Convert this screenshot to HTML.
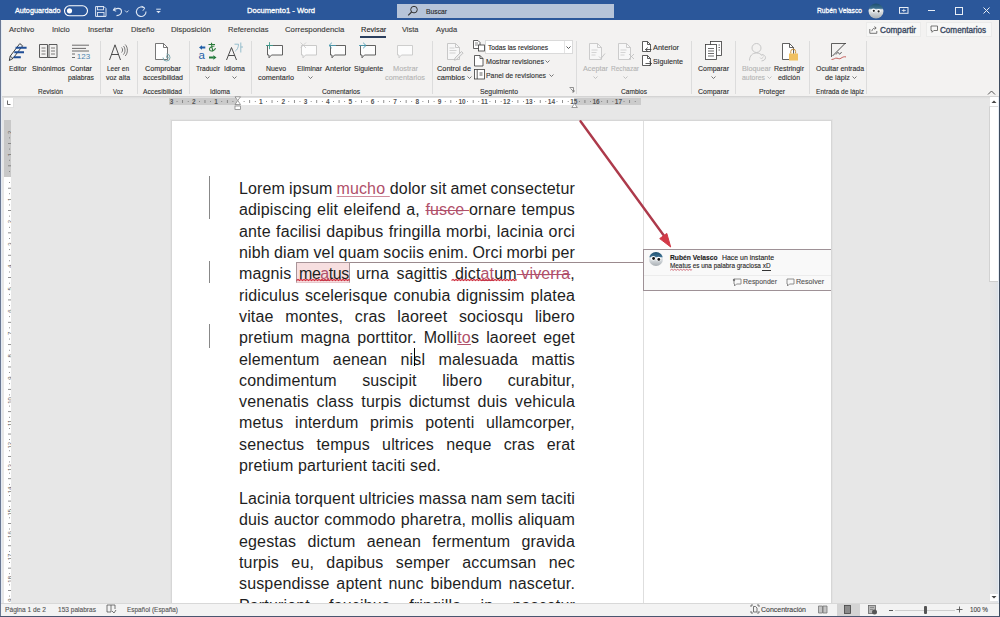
<!DOCTYPE html><html><head><meta charset="utf-8"><style>
*{margin:0;padding:0;box-sizing:border-box}
html,body{width:1000px;height:617px;overflow:hidden;background:#e7e7e7;font-family:"Liberation Sans",sans-serif}
.t{position:absolute;white-space:nowrap;transform-origin:0 50%;-webkit-text-stroke:0.12px currentColor}
.r{position:absolute}
.s{position:absolute;overflow:visible}
.ln{position:absolute;left:239px;width:336px;height:21px;display:flex;justify-content:space-between;font-size:16px;line-height:21px;color:#1e1e1e;white-space:nowrap;letter-spacing:0.15px}
.ln span{position:relative}
.red{color:#b0506a}
</style></head><body>

<div class="r" style="left:0px;top:0px;width:1000px;height:21px;background:#2b579a"></div>
<div class="r" style="left:0px;top:20px;width:1000px;height:1px;background:#34527f"></div>
<div class="t" style="left:14.50px;top:6.20px;font-size:8px;line-height:9.60px;color:#fff;transform:scaleX(0.9052);-webkit-text-stroke:0.3px #fff">Autoguardado</div>
<svg class="s" style="left:63px;top:5px;" width="26" height="12" viewBox="0 0 26 12"><rect x="1.5" y="0.8" width="23" height="10" rx="5" fill="none" stroke="#fff" stroke-width="1.1"/><circle cx="6.5" cy="5.8" r="2.6" fill="#fff"/></svg>
<svg class="s" style="left:95px;top:6px;" width="12" height="11" viewBox="0 0 12 11"><path d="M0.6 0.6H9l2 2V10.4H0.6Z" fill="none" stroke="#dde6f3" stroke-width="1"/><rect x="2.5" y="0.6" width="6" height="3.2" fill="none" stroke="#dde6f3" stroke-width="0.9"/><rect x="2.5" y="6.5" width="6.5" height="3.9" fill="none" stroke="#dde6f3" stroke-width="0.9"/></svg>
<svg class="s" style="left:112px;top:5px;" width="18" height="12" viewBox="0 0 18 12"><path d="M3 2.5 L1.2 5.2 L4.2 6.2" fill="none" stroke="#dde6f3" stroke-width="1"/><path d="M1.6 5.2 C4 2.8 9 2.5 9.5 6 C9.8 8.8 7.5 10.5 4.5 10.6" fill="none" stroke="#dde6f3" stroke-width="1.1"/><path d="M13 5.5l1.8 1.8l1.8-1.8" fill="none" stroke="#dde6f3" stroke-width="0.9"/></svg>
<svg class="s" style="left:135px;top:5px;" width="13" height="13" viewBox="0 0 13 13"><path d="M9.5 3.2 A4.8 4.8 0 1 0 11 6.5" fill="none" stroke="#dde6f3" stroke-width="1.1"/><path d="M6.8 1.2 L9.8 3.2 L7.8 5.8" fill="none" stroke="#dde6f3" stroke-width="1"/></svg>
<svg class="s" style="left:155px;top:8px;" width="7" height="6" viewBox="0 0 7 6"><path d="M1.2 1.2H5.8" stroke="#dde6f3" stroke-width="1"/><path d="M1.2 3H5.8L3.5 5.3Z" fill="#dde6f3"/></svg>
<div class="t" style="left:246.50px;top:6.00px;font-size:8px;line-height:9.60px;color:#fff;transform:scaleX(0.9519);-webkit-text-stroke:0.3px #fff">Documento1 - Word</div>
<div class="r" style="left:397px;top:4px;width:217px;height:13.5px;background:#b6c4d9"></div>
<svg class="s" style="left:407px;top:5px;" width="12" height="12" viewBox="0 0 12 12"><circle cx="7" cy="4.6" r="3.3" fill="none" stroke="#333" stroke-width="1"/><path d="M4.6 7 L1.2 10.4" stroke="#333" stroke-width="1.1"/></svg>
<div class="t" style="left:426.00px;top:6.50px;font-size:7.5px;line-height:9.00px;color:#262626;transform:scaleX(0.8996);">Buscar</div>
<div class="t" style="left:817.00px;top:6.20px;font-size:8px;line-height:9.60px;color:#fff;transform:scaleX(0.8361);-webkit-text-stroke:0.3px #fff">Rubén Velasco</div>
<svg class="s" style="left:868px;top:3px;" width="16" height="16" viewBox="0 0 16 16"><defs><linearGradient id="av" x1="0" y1="0" x2="0" y2="1"><stop offset="0" stop-color="#1d4f6e"/><stop offset="0.32" stop-color="#3d7090"/><stop offset="0.42" stop-color="#e8ecee"/><stop offset="1" stop-color="#a8aeb3"/></linearGradient></defs><circle cx="8" cy="8" r="7.5" fill="url(#av)"/><ellipse cx="5.5" cy="7.5" rx="2.2" ry="2" fill="#fff"/><ellipse cx="10.5" cy="8" rx="2.2" ry="2" fill="#fff"/><circle cx="5.8" cy="7.8" r="1.1" fill="#222"/><circle cx="10.6" cy="8.4" r="1.1" fill="#222"/></svg>
<svg class="s" style="left:898.5px;top:7px;" width="10" height="7" viewBox="0 0 10 7"><rect x="0.5" y="0.5" width="8.5" height="5.8" fill="none" stroke="#e8eef6" stroke-width="1"/><path d="M2.8 3.5h4M4.8 1.8v3.2" stroke="#e8eef6" stroke-width="0.8"/></svg>
<div class="r" style="left:928px;top:10px;width:7px;height:1px;background:#e8eef6"></div>
<div class="r" style="left:955px;top:7px;width:7.5px;height:7.5px;border:1px solid #e8eef6"></div>
<svg class="s" style="left:982.5px;top:7px;" width="7" height="7" viewBox="0 0 7 7"><path d="M0.5 0.5L6.5 6.5M6.5 0.5L0.5 6.5" stroke="#e8eef6" stroke-width="1"/></svg>
<div class="r" style="left:0px;top:20px;width:1000px;height:77px;background:#f3f2f1"></div>
<div class="t" style="left:9.00px;top:25.40px;font-size:8px;line-height:9.60px;color:#3a3a3a;transform:scaleX(0.9484);">Archivo</div>
<div class="t" style="left:52.30px;top:25.40px;font-size:8px;line-height:9.60px;color:#3a3a3a;transform:scaleX(0.9477);">Inicio</div>
<div class="t" style="left:87.50px;top:25.40px;font-size:8px;line-height:9.60px;color:#3a3a3a;transform:scaleX(0.9291);">Insertar</div>
<div class="t" style="left:130.70px;top:25.40px;font-size:8px;line-height:9.60px;color:#3a3a3a;transform:scaleX(0.9356);">Diseño</div>
<div class="t" style="left:170.70px;top:25.40px;font-size:8px;line-height:9.60px;color:#3a3a3a;transform:scaleX(0.9729);">Disposición</div>
<div class="t" style="left:227.50px;top:25.40px;font-size:8px;line-height:9.60px;color:#3a3a3a;transform:scaleX(0.9487);">Referencias</div>
<div class="t" style="left:284.50px;top:25.40px;font-size:8px;line-height:9.60px;color:#3a3a3a;transform:scaleX(0.9733);">Correspondencia</div>
<div class="t" style="left:360.50px;top:25.40px;font-size:8px;line-height:9.60px;color:#262626;transform:scaleX(0.9330);">Revisar</div>
<div class="t" style="left:401.80px;top:25.40px;font-size:8px;line-height:9.60px;color:#3a3a3a;transform:scaleX(0.9296);">Vista</div>
<div class="t" style="left:435.80px;top:25.40px;font-size:8px;line-height:9.60px;color:#3a3a3a;transform:scaleX(0.9406);">Ayuda</div>
<div class="r" style="left:360px;top:36px;width:26px;height:1.5px;background:#2b3f5e"></div>
<div class="r" style="left:866px;top:22px;width:55px;height:15px;background:#f7f7f6;border:1px solid #ebebea"></div>
<svg class="s" style="left:868.5px;top:25px;" width="9" height="9" viewBox="0 0 9 9"><path d="M0.8 4v4.3h7V6" fill="none" stroke="#555" stroke-width="0.8"/><path d="M2.8 6.2C3.2 3.8 4.8 3 6.8 3M5.5 1.5L7.2 3L5.5 4.5" fill="none" stroke="#555" stroke-width="0.8"/></svg>
<div class="t" style="left:879.50px;top:25.20px;font-size:8.5px;line-height:10.20px;color:#3b4a63;transform:scaleX(0.9648);-webkit-text-stroke:0.35px #3b4a63">Compartir</div>
<div class="r" style="left:926px;top:22px;width:66px;height:15px;background:#f7f7f6;border:1px solid #ebebea"></div>
<svg class="s" style="left:930px;top:25px;" width="9" height="9" viewBox="0 0 9 9"><path d="M1 1h6.5v4.5H3.8L2 7.3V5.5H1z" fill="none" stroke="#555" stroke-width="0.8"/></svg>
<div class="t" style="left:940.00px;top:25.20px;font-size:8.5px;line-height:10.20px;color:#3b4a63;transform:scaleX(0.9546);-webkit-text-stroke:0.35px #3b4a63">Comentarios</div>
<div class="r" style="left:100px;top:41px;width:1px;height:53px;background:#dcdcdc"></div>
<div class="r" style="left:136.5px;top:41px;width:1px;height:53px;background:#dcdcdc"></div>
<div class="r" style="left:189px;top:41px;width:1px;height:53px;background:#dcdcdc"></div>
<div class="r" style="left:251px;top:41px;width:1px;height:53px;background:#dcdcdc"></div>
<div class="r" style="left:431.5px;top:41px;width:1px;height:53px;background:#dcdcdc"></div>
<div class="r" style="left:576px;top:41px;width:1px;height:53px;background:#dcdcdc"></div>
<div class="r" style="left:690.5px;top:41px;width:1px;height:53px;background:#dcdcdc"></div>
<div class="r" style="left:735px;top:41px;width:1px;height:53px;background:#dcdcdc"></div>
<div class="r" style="left:809px;top:41px;width:1px;height:53px;background:#dcdcdc"></div>
<div class="r" style="left:866px;top:41px;width:1px;height:53px;background:#dcdcdc"></div>
<div class="r" style="left:0px;top:96px;width:1000px;height:1px;background:#d4d4d4"></div>
<div class="r" style="left:0px;top:97px;width:1000px;height:2px;background:linear-gradient(#dcdcdc,#e7e7e7)"></div>
<div class="r" style="left:485px;top:40px;width:88px;height:14px;background:#fff;border:1px solid #dadada"></div>
<div class="r" style="left:564px;top:41px;width:1px;height:12px;background:#e4e4e4"></div>
<div class="t" style="left:9.00px;top:64.30px;font-size:8.0px;line-height:9.60px;color:#303030;transform:scaleX(0.8373);">Editor</div>
<div class="t" style="left:32.00px;top:64.30px;font-size:8.0px;line-height:9.60px;color:#303030;transform:scaleX(0.8835);">Sinónimos</div>
<div class="t" style="left:70.00px;top:64.30px;font-size:8.0px;line-height:9.60px;color:#303030;transform:scaleX(0.9162);">Contar</div>
<div class="t" style="left:68.00px;top:73.30px;font-size:8.0px;line-height:9.60px;color:#303030;transform:scaleX(0.8472);">palabras</div>
<div class="t" style="left:107.00px;top:64.30px;font-size:8.0px;line-height:9.60px;color:#303030;transform:scaleX(0.8108);">Leer en</div>
<div class="t" style="left:106.00px;top:73.30px;font-size:8.0px;line-height:9.60px;color:#303030;transform:scaleX(0.8705);">voz alta</div>
<div class="t" style="left:145.00px;top:64.30px;font-size:8.0px;line-height:9.60px;color:#303030;transform:scaleX(0.8996);">Comprobar</div>
<div class="t" style="left:143.00px;top:73.30px;font-size:8.0px;line-height:9.60px;color:#303030;transform:scaleX(0.8732);">accesibilidad</div>
<div class="t" style="left:196.00px;top:64.30px;font-size:8.0px;line-height:9.60px;color:#303030;transform:scaleX(0.8263);">Traducir</div>
<div class="t" style="left:224.00px;top:64.30px;font-size:8.0px;line-height:9.60px;color:#303030;transform:scaleX(0.8745);">Idioma</div>
<div class="t" style="left:266.00px;top:64.30px;font-size:8.0px;line-height:9.60px;color:#303030;transform:scaleX(0.8648);">Nuevo</div>
<div class="t" style="left:258.00px;top:73.30px;font-size:8.0px;line-height:9.60px;color:#303030;transform:scaleX(0.9097);">comentario</div>
<div class="t" style="left:297.00px;top:64.30px;font-size:8.0px;line-height:9.60px;color:#303030;transform:scaleX(0.8652);">Eliminar</div>
<div class="t" style="left:325.00px;top:64.30px;font-size:8.0px;line-height:9.60px;color:#303030;transform:scaleX(0.9281);">Anterior</div>
<div class="t" style="left:354.00px;top:64.30px;font-size:8.0px;line-height:9.60px;color:#303030;transform:scaleX(0.8693);">Siguiente</div>
<div class="t" style="left:393.00px;top:64.30px;font-size:8.0px;line-height:9.60px;color:#b4b4b4;transform:scaleX(0.9220);">Mostrar</div>
<div class="t" style="left:385.00px;top:73.30px;font-size:8.0px;line-height:9.60px;color:#b4b4b4;transform:scaleX(0.9179);">comentarios</div>
<div class="t" style="left:437.00px;top:64.30px;font-size:8.0px;line-height:9.60px;color:#303030;transform:scaleX(0.9211);">Control de</div>
<div class="t" style="left:437.00px;top:73.30px;font-size:8.0px;line-height:9.60px;color:#303030;transform:scaleX(0.9399);">cambios</div>
<div class="t" style="left:488.00px;top:43.40px;font-size:8.0px;line-height:9.60px;color:#262626;transform:scaleX(0.8329);">Todas las revisiones</div>
<div class="t" style="left:486.00px;top:57.00px;font-size:8.0px;line-height:9.60px;color:#303030;transform:scaleX(0.8875);">Mostrar revisiones</div>
<div class="t" style="left:486.00px;top:71.00px;font-size:8.0px;line-height:9.60px;color:#303030;transform:scaleX(0.8593);">Panel de revisiones</div>
<div class="t" style="left:583.00px;top:64.30px;font-size:8.0px;line-height:9.60px;color:#b4b4b4;transform:scaleX(0.9067);">Aceptar</div>
<div class="t" style="left:611.00px;top:64.30px;font-size:8.0px;line-height:9.60px;color:#b4b4b4;transform:scaleX(0.8178);">Rechazar</div>
<div class="t" style="left:653.00px;top:43.10px;font-size:8.0px;line-height:9.60px;color:#303030;transform:scaleX(0.9281);">Anterior</div>
<div class="t" style="left:653.00px;top:57.10px;font-size:8.0px;line-height:9.60px;color:#303030;transform:scaleX(0.8993);">Siguiente</div>
<div class="t" style="left:698.00px;top:64.30px;font-size:8.0px;line-height:9.60px;color:#303030;transform:scaleX(0.8716);">Comparar</div>
<div class="t" style="left:742.00px;top:64.30px;font-size:8.0px;line-height:9.60px;color:#b4b4b4;transform:scaleX(0.9055);">Bloquear</div>
<div class="t" style="left:742.00px;top:73.30px;font-size:8.0px;line-height:9.60px;color:#b4b4b4;transform:scaleX(0.8619);">autores</div>
<div class="t" style="left:774.00px;top:64.30px;font-size:8.0px;line-height:9.60px;color:#303030;transform:scaleX(0.8764);">Restringir</div>
<div class="t" style="left:778.00px;top:73.30px;font-size:8.0px;line-height:9.60px;color:#303030;transform:scaleX(0.8678);">edición</div>
<div class="t" style="left:816.00px;top:64.30px;font-size:8.0px;line-height:9.60px;color:#303030;transform:scaleX(0.8705);">Ocultar entrada</div>
<div class="t" style="left:825.00px;top:73.30px;font-size:8.0px;line-height:9.60px;color:#303030;transform:scaleX(0.9066);">de lápiz</div>
<div class="t" style="left:38.00px;top:87.10px;font-size:8.0px;line-height:9.60px;color:#303030;transform:scaleX(0.8148);">Revisión</div>
<div class="t" style="left:113.00px;top:87.10px;font-size:8.0px;line-height:9.60px;color:#303030;transform:scaleX(0.7494);">Voz</div>
<div class="t" style="left:143.00px;top:87.10px;font-size:8.0px;line-height:9.60px;color:#303030;transform:scaleX(0.8352);">Accesibilidad</div>
<div class="t" style="left:210.00px;top:87.10px;font-size:8.0px;line-height:9.60px;color:#303030;transform:scaleX(0.8329);">Idioma</div>
<div class="t" style="left:322.00px;top:87.10px;font-size:8.0px;line-height:9.60px;color:#303030;transform:scaleX(0.8379);">Comentarios</div>
<div class="t" style="left:480.00px;top:87.10px;font-size:8.0px;line-height:9.60px;color:#303030;transform:scaleX(0.8544);">Seguimiento</div>
<div class="t" style="left:621.00px;top:87.10px;font-size:8.0px;line-height:9.60px;color:#303030;transform:scaleX(0.8236);">Cambios</div>
<div class="t" style="left:698.00px;top:87.10px;font-size:8.0px;line-height:9.60px;color:#303030;transform:scaleX(0.8716);">Comparar</div>
<div class="t" style="left:759.00px;top:87.10px;font-size:8.0px;line-height:9.60px;color:#303030;transform:scaleX(0.8473);">Proteger</div>
<div class="t" style="left:816.00px;top:87.10px;font-size:8.0px;line-height:9.60px;color:#303030;transform:scaleX(0.8302);">Entrada de lápiz</div>
<svg class="s" style="left:204.5px;top:75.5px;" width="5" height="3" viewBox="0 0 5 3"><path d="M0.5 0.5L2.5 2.5L4.5 0.5" fill="none" stroke="#666" stroke-width="0.9"/></svg>
<svg class="s" style="left:231.5px;top:75.5px;" width="5" height="3" viewBox="0 0 5 3"><path d="M0.5 0.5L2.5 2.5L4.5 0.5" fill="none" stroke="#666" stroke-width="0.9"/></svg>
<svg class="s" style="left:307.5px;top:75.5px;" width="5" height="3" viewBox="0 0 5 3"><path d="M0.5 0.5L2.5 2.5L4.5 0.5" fill="none" stroke="#666" stroke-width="0.9"/></svg>
<svg class="s" style="left:466.5px;top:75.5px;" width="5" height="3" viewBox="0 0 5 3"><path d="M0.5 0.5L2.5 2.5L4.5 0.5" fill="none" stroke="#666" stroke-width="0.9"/></svg>
<svg class="s" style="left:544.5px;top:59.5px;" width="5" height="3" viewBox="0 0 5 3"><path d="M0.5 0.5L2.5 2.5L4.5 0.5" fill="none" stroke="#666" stroke-width="0.9"/></svg>
<svg class="s" style="left:548.5px;top:73.5px;" width="5" height="3" viewBox="0 0 5 3"><path d="M0.5 0.5L2.5 2.5L4.5 0.5" fill="none" stroke="#666" stroke-width="0.9"/></svg>
<svg class="s" style="left:592.5px;top:75.5px;" width="5" height="3" viewBox="0 0 5 3"><path d="M0.5 0.5L2.5 2.5L4.5 0.5" fill="none" stroke="#bbb" stroke-width="0.9"/></svg>
<svg class="s" style="left:622.5px;top:75.5px;" width="5" height="3" viewBox="0 0 5 3"><path d="M0.5 0.5L2.5 2.5L4.5 0.5" fill="none" stroke="#bbb" stroke-width="0.9"/></svg>
<svg class="s" style="left:710.5px;top:75.5px;" width="5" height="3" viewBox="0 0 5 3"><path d="M0.5 0.5L2.5 2.5L4.5 0.5" fill="none" stroke="#666" stroke-width="0.9"/></svg>
<svg class="s" style="left:766.5px;top:75.5px;" width="5" height="3" viewBox="0 0 5 3"><path d="M0.5 0.5L2.5 2.5L4.5 0.5" fill="none" stroke="#bbb" stroke-width="0.9"/></svg>
<svg class="s" style="left:851.5px;top:75.5px;" width="5" height="3" viewBox="0 0 5 3"><path d="M0.5 0.5L2.5 2.5L4.5 0.5" fill="none" stroke="#666" stroke-width="0.9"/></svg>
<svg class="s" style="left:566.0px;top:45.5px;" width="5" height="3" viewBox="0 0 5 3"><path d="M0.5 0.5L2.5 2.5L4.5 0.5" fill="none" stroke="#444" stroke-width="0.9"/></svg>
<svg class="s" style="left:569px;top:87px;" width="6" height="6" viewBox="0 0 6 6"><path d="M0.5 0.5h4v4" fill="none" stroke="#777" stroke-width="0.8"/><path d="M1.5 1.5L5 5M3 5h2v-2" fill="none" stroke="#777" stroke-width="0.8"/></svg>
<svg class="s" style="left:987px;top:90px;" width="9" height="5" viewBox="0 0 9 5"><path d="M1 4.5L4.5 1L8 4.5" fill="none" stroke="#555" stroke-width="1"/></svg>
<svg class="s" style="left:8px;top:42px;" width="20" height="20" viewBox="0 0 20 20"><path d="M1.3 18.5 L2.2 14.2 L11.8 1.6 L14.6 3.8 L5 16.4 Z" fill="#eef5fc" stroke="#2d2d2d" stroke-width="0.9" stroke-linejoin="round"/><path d="M2.2 14.2L5 16.4" stroke="#2d2d2d" stroke-width="0.8"/><path d="M7.6 5.8h11M6.3 10.3h9.7M5.7 15.2h7.1" stroke="#1f4e96" stroke-width="2"/></svg>
<svg class="s" style="left:38px;top:43px;" width="21" height="17" viewBox="0 0 21 17"><path d="M1.5 1.5h8v13h-8zM11 1.5h8v13h-8z" fill="none" stroke="#4a4a4a" stroke-width="0.9"/><path d="M9.5 14.5h1.5" stroke="#4a4a4a" stroke-width="0.9"/><path d="M3.5 5h4M3.5 8h4M3.5 11h4M13 5h4M13 8h4M13 11h4" stroke="#5a5a5a" stroke-width="0.8"/></svg>
<svg class="s" style="left:71px;top:44px;" width="20" height="16" viewBox="0 0 20 16"><path d="M1 1.2h17M1 4.4h14M1 7h17M1 10h3M1 13.5h3" stroke="#4a4a4a" stroke-width="0.8"/><text x="5.8" y="15" font-size="8" fill="#4f86b0" font-family="Liberation Sans">123</text></svg>
<svg class="s" style="left:108px;top:43px;" width="21" height="18" viewBox="0 0 21 18"><path d="M1.5 17L7 1.8L12.5 17M3.6 11.5h6.8" fill="none" stroke="#3a3a3a" stroke-width="0.9"/><path d="M13.6 4.5c1.3 1.3 1.3 3.7 0 5M15.4 3c2.1 2.1 2.1 6.5 0 8.6M17.2 1.5c2.9 2.9 2.9 8.6 0 11.5" fill="none" stroke="#555" stroke-width="0.8"/></svg>
<svg class="s" style="left:154px;top:42px;" width="19" height="20" viewBox="0 0 19 20"><path d="M1.5 1.5h8l4 4V17.5h-12z" fill="#fff" stroke="#555" stroke-width="0.8"/><path d="M9.5 1.5v4h4" fill="none" stroke="#555" stroke-width="0.8"/><path d="M9 15.5a3.5 3.5 0 1 0 3.5-3.5" fill="none" stroke="#7aa7ae" stroke-width="1"/><path d="M12.5 13.5v2.2h2.5" fill="none" stroke="#7aa7ae" stroke-width="0.8"/></svg>
<svg class="s" style="left:198px;top:42px;" width="20" height="18" viewBox="0 0 20 18"><path d="M1 5.5l3-2.2v4.4z" fill="#1f5fa8"/><rect x="3.8" y="4.5" width="3.5" height="2" fill="#1f5fa8"/><text x="0.6" y="17" font-size="11.5" font-family="Liberation Sans" fill="#1f5fa8">a</text><path d="M10.5 2.5H17M13.5 0.8C13.5 3.5 14 6.5 15 9.5M16.5 4C13 4 10.5 6.5 11.8 8.3C13 9.6 17 8.8 17.5 6.2" fill="none" stroke="#2a7a3a" stroke-width="1.1"/><path d="M18.5 15.5l-3.2 2.2v-4.4z" fill="#217a3a"/><rect x="11" y="14.5" width="4.5" height="2" fill="#217a3a"/></svg>
<svg class="s" style="left:225px;top:41px;" width="20" height="20" viewBox="0 0 20 20"><path d="M1.5 19L6.5 6.5L11.5 19M3.3 14.5h6.4" fill="none" stroke="#3a3a3a" stroke-width="0.9"/><path d="M9.5 3.2h4c0 3.2-1.2 5.5-3.3 7M15.8 1.5v10M15.8 6h2.2" fill="none" stroke="#8ab8c8" stroke-width="0.9"/></svg>
<svg class="s" style="left:265px;top:42px;" width="19" height="18" viewBox="0 0 19 18"><path d="M2.5 3.5h15v9.5H6.5l-2.5 2.8v-2.8H2.5z" fill="#fcfcfc" stroke="#505050" stroke-width="0.9" stroke-linejoin="round"/><path d="M4.5 0.2v7M1 3.5h7" stroke="#3a9a8a" stroke-width="0.9"/></svg>
<svg class="s" style="left:299px;top:42px;" width="19" height="18" viewBox="0 0 19 18"><path d="M2.5 3.5h15v9.5H6.5l-2.5 2.8v-2.8H2.5z" fill="#fcfcfc" stroke="#c4c4c4" stroke-width="0.9" stroke-linejoin="round"/><path d="M1.5 0.5L7 6M7 0.5L1.5 6" stroke="#c8c8c8" stroke-width="0.8"/></svg>
<svg class="s" style="left:328px;top:42px;" width="19" height="18" viewBox="0 0 19 18"><path d="M2.5 3.5h15v9.5H6.5l-2.5 2.8v-2.8H2.5z" fill="#fcfcfc" stroke="#505050" stroke-width="0.9" stroke-linejoin="round"/><path d="M1 3.5h7M3.8 0.8L1 3.5l2.8 2.7" fill="none" stroke="#4a9ab0" stroke-width="0.9"/></svg>
<svg class="s" style="left:358px;top:42px;" width="19" height="18" viewBox="0 0 19 18"><path d="M2.5 3.5h15v9.5H6.5l-2.5 2.8v-2.8H2.5z" fill="#fcfcfc" stroke="#505050" stroke-width="0.9" stroke-linejoin="round"/><path d="M1 3.5h7M5.2 0.8L8 3.5l-2.8 2.7" fill="none" stroke="#4a9ab0" stroke-width="0.9"/></svg>
<svg class="s" style="left:395px;top:42px;" width="19" height="18" viewBox="0 0 19 18"><path d="M2.5 3.5h15v9.5H6.5l-2.5 2.8v-2.8H2.5z" fill="#fcfcfc" stroke="#c8c8c8" stroke-width="0.9" stroke-linejoin="round"/></svg>
<svg class="s" style="left:446px;top:42px;" width="19" height="20" viewBox="0 0 19 20"><path d="M1.5 1.5h8l4 4V17.5h-12z" fill="#f7f7f7" stroke="#bdbdbd" stroke-width="0.8"/><path d="M9.5 1.5v4h4" fill="none" stroke="#bdbdbd" stroke-width="0.8"/><path d="M3.5 6h5M3.5 8.5h7M3.5 11h6" stroke="#c8c8c8" stroke-width="0.8"/><path d="M9 16l6.5-6.5 1.6 1.6-6.5 6.5-2.2 0.6z" fill="#ececec" stroke="#b8b8b8" stroke-width="0.8"/></svg>
<svg class="s" style="left:473px;top:40px;" width="13" height="12" viewBox="0 0 13 12"><path d="M0.5 0.5h4.5l2 2V8.5H0.5z" fill="#fff" stroke="#3a3a3a" stroke-width="0.8"/><path d="M2 3h3M2 5h3" stroke="#3a3a3a" stroke-width="0.6"/><rect x="5.5" y="5" width="6" height="6" fill="#fff" stroke="#3a3a3a" stroke-width="0.8"/></svg>
<svg class="s" style="left:474px;top:55px;" width="10" height="12" viewBox="0 0 10 12"><path d="M0.5 0.5h5.5l3 3V11H0.5z" fill="#fff" stroke="#3a3a3a" stroke-width="0.8"/><path d="M6 0.5v3h3" fill="none" stroke="#3a3a3a" stroke-width="0.8"/></svg>
<svg class="s" style="left:474px;top:69px;" width="11" height="11" viewBox="0 0 11 11"><rect x="0.5" y="0.5" width="10" height="9.5" fill="#fff" stroke="#3a3a3a" stroke-width="0.8"/><path d="M3.2 0.5v9.5" stroke="#3a3a3a" stroke-width="0.8"/><path d="M5.5 4h3M5.5 6h3" stroke="#3a3a3a" stroke-width="0.8"/></svg>
<svg class="s" style="left:588px;top:42px;" width="19" height="20" viewBox="0 0 19 20"><path d="M1.5 1.5h8l4 4V17.5h-12z" fill="#f7f7f7" stroke="#c2c2c2" stroke-width="0.8"/><path d="M9.5 1.5v4h4" fill="none" stroke="#c2c2c2" stroke-width="0.8"/><path d="M3.5 8h6M3.5 10.5h5M3.5 13h4" stroke="#cacaca" stroke-width="0.8"/><path d="M11 14.5l2 2 4-5" fill="none" stroke="#c2c2c2" stroke-width="0.9"/></svg>
<svg class="s" style="left:617px;top:42px;" width="19" height="20" viewBox="0 0 19 20"><path d="M1.5 1.5h8l4 4V17.5h-12z" fill="#f7f7f7" stroke="#c2c2c2" stroke-width="0.8"/><path d="M9.5 1.5v4h4" fill="none" stroke="#c2c2c2" stroke-width="0.8"/><path d="M3.5 8h6M3.5 10.5h5M3.5 13h4" stroke="#cacaca" stroke-width="0.8"/><path d="M12 12l5 5M17 12l-5 5" stroke="#c2c2c2" stroke-width="0.9"/></svg>
<svg class="s" style="left:642px;top:41px;" width="11" height="12" viewBox="0 0 11 12"><path d="M0.5 0.5h5l3 3V10.5H0.5z" fill="#fff" stroke="#333" stroke-width="0.8"/><path d="M5.5 0.5v3h3" fill="none" stroke="#333" stroke-width="0.8"/><path d="M5.8 6.5l-2.3 2l2.3 2M3.5 8.5h6" fill="none" stroke="#333" stroke-width="0.8"/></svg>
<svg class="s" style="left:642px;top:55px;" width="11" height="12" viewBox="0 0 11 12"><path d="M0.5 0.5h5l3 3V10.5H0.5z" fill="#fff" stroke="#333" stroke-width="0.8"/><path d="M5.5 0.5v3h3" fill="none" stroke="#333" stroke-width="0.8"/><path d="M7.2 6.5l2.3 2l-2.3 2M3.5 8.5h6" fill="none" stroke="#333" stroke-width="0.8"/></svg>
<svg class="s" style="left:704px;top:41px;" width="20" height="20" viewBox="0 0 20 20"><rect x="6.5" y="0.5" width="11" height="14" fill="#fff" stroke="#3a3a3a" stroke-width="0.8"/><rect x="1.5" y="3.5" width="11" height="15" fill="#fff" stroke="#3a3a3a" stroke-width="0.8"/><path d="M4 7.5h6M4 10h6M4 12.5h6M4 15h6M14.5 4h1.5M14.5 6.5h1.5M14.5 9h1.5" stroke="#4a4a4a" stroke-width="0.8"/></svg>
<svg class="s" style="left:748px;top:42px;" width="21" height="20" viewBox="0 0 21 20"><circle cx="8.5" cy="6" r="4.5" fill="none" stroke="#c2c2c2" stroke-width="0.9"/><path d="M1.5 18.5c0-4.8 3-7.5 7-7.5 2.5 0 4.5 1 5.5 2.8" fill="none" stroke="#c2c2c2" stroke-width="0.9"/><path d="M13.5 12.5c2.2 0 4 1.4 4 3.2s-1.8 3.2-4 3.2" fill="none" stroke="#c2c2c2" stroke-width="0.9"/><path d="M12 15.5l1.5 1.5 2-2.5" fill="none" stroke="#c8c8c8" stroke-width="0.8"/></svg>
<svg class="s" style="left:781px;top:42px;" width="19" height="20" viewBox="0 0 19 20"><path d="M1.5 1.5h7l4 4V17.5h-11z" fill="#fff" stroke="#3a3a3a" stroke-width="0.8"/><path d="M8.5 1.5v4h4" fill="none" stroke="#3a3a3a" stroke-width="0.8"/><path d="M9.8 11.5v-2a2.4 2.4 0 0 1 4.8 0v2" fill="none" stroke="#c9923a" stroke-width="1"/><rect x="8" y="11.5" width="9" height="7" fill="#f0c060"/></svg>
<svg class="s" style="left:830px;top:42px;" width="19" height="19" viewBox="0 0 19 19"><path d="M1.5 15V1.5H16" fill="none" stroke="#3a3a3a" stroke-width="0.8"/><path d="M2.5 14L15.5 1" stroke="#3a3a3a" stroke-width="0.9"/><path d="M6 12.5c1.5-2.5 2.5-2.5 3-1s1.5 0.5 2.5-1.5" fill="none" stroke="#3a3a3a" stroke-width="0.8"/><path d="M1.5 17.5c2.5 0 3.5-1.8 5.5-1.3s2.5 1 4 0 3-1.8 5-1.3" fill="none" stroke="#c0504d" stroke-width="0.9"/></svg>
<div class="r" style="left:169px;top:98px;width:68px;height:7px;background:#cbcbcb"></div>
<div class="r" style="left:237px;top:98px;width:337px;height:7px;background:#fff"></div>
<div class="r" style="left:574px;top:98px;width:67px;height:7px;background:#cbcbcb"></div>
<svg class="s" style="left:169px;top:98px;" width="472" height="7" viewBox="0 0 472 7"><text x="2.45" y="5.8" font-size="6.5" font-weight="700" text-anchor="middle" fill="#555" font-family="Liberation Sans">3</text><rect x="7.64" y="3" width="0.8" height="1" fill="#777"/><rect x="13.22" y="2" width="0.8" height="3" fill="#777"/><rect x="18.81" y="3" width="0.8" height="1" fill="#777"/><text x="24.80" y="5.8" font-size="6.5" font-weight="700" text-anchor="middle" fill="#555" font-family="Liberation Sans">2</text><rect x="29.99" y="3" width="0.8" height="1" fill="#777"/><rect x="35.58" y="2" width="0.8" height="3" fill="#777"/><rect x="41.16" y="3" width="0.8" height="1" fill="#777"/><text x="47.15" y="5.8" font-size="6.5" font-weight="700" text-anchor="middle" fill="#555" font-family="Liberation Sans">1</text><rect x="52.34" y="3" width="0.8" height="1" fill="#777"/><rect x="57.93" y="2" width="0.8" height="3" fill="#777"/><rect x="63.51" y="3" width="0.8" height="1" fill="#777"/><rect x="74.69" y="3" width="0.8" height="1" fill="#777"/><rect x="80.28" y="2" width="0.8" height="3" fill="#777"/><rect x="85.86" y="3" width="0.8" height="1" fill="#777"/><text x="91.85" y="5.8" font-size="6.5" font-weight="700" text-anchor="middle" fill="#555" font-family="Liberation Sans">1</text><rect x="97.04" y="3" width="0.8" height="1" fill="#777"/><rect x="102.63" y="2" width="0.8" height="3" fill="#777"/><rect x="108.21" y="3" width="0.8" height="1" fill="#777"/><text x="114.20" y="5.8" font-size="6.5" font-weight="700" text-anchor="middle" fill="#555" font-family="Liberation Sans">2</text><rect x="119.39" y="3" width="0.8" height="1" fill="#777"/><rect x="124.97" y="2" width="0.8" height="3" fill="#777"/><rect x="130.56" y="3" width="0.8" height="1" fill="#777"/><text x="136.55" y="5.8" font-size="6.5" font-weight="700" text-anchor="middle" fill="#555" font-family="Liberation Sans">3</text><rect x="141.74" y="3" width="0.8" height="1" fill="#777"/><rect x="147.33" y="2" width="0.8" height="3" fill="#777"/><rect x="152.91" y="3" width="0.8" height="1" fill="#777"/><text x="158.90" y="5.8" font-size="6.5" font-weight="700" text-anchor="middle" fill="#555" font-family="Liberation Sans">4</text><rect x="164.09" y="3" width="0.8" height="1" fill="#777"/><rect x="169.67" y="2" width="0.8" height="3" fill="#777"/><rect x="175.26" y="3" width="0.8" height="1" fill="#777"/><text x="181.25" y="5.8" font-size="6.5" font-weight="700" text-anchor="middle" fill="#555" font-family="Liberation Sans">5</text><rect x="186.44" y="3" width="0.8" height="1" fill="#777"/><rect x="192.03" y="2" width="0.8" height="3" fill="#777"/><rect x="197.61" y="3" width="0.8" height="1" fill="#777"/><text x="203.60" y="5.8" font-size="6.5" font-weight="700" text-anchor="middle" fill="#555" font-family="Liberation Sans">6</text><rect x="208.79" y="3" width="0.8" height="1" fill="#777"/><rect x="214.38" y="2" width="0.8" height="3" fill="#777"/><rect x="219.96" y="3" width="0.8" height="1" fill="#777"/><text x="225.95" y="5.8" font-size="6.5" font-weight="700" text-anchor="middle" fill="#555" font-family="Liberation Sans">7</text><rect x="231.14" y="3" width="0.8" height="1" fill="#777"/><rect x="236.73" y="2" width="0.8" height="3" fill="#777"/><rect x="242.31" y="3" width="0.8" height="1" fill="#777"/><text x="248.30" y="5.8" font-size="6.5" font-weight="700" text-anchor="middle" fill="#555" font-family="Liberation Sans">8</text><rect x="253.49" y="3" width="0.8" height="1" fill="#777"/><rect x="259.08" y="2" width="0.8" height="3" fill="#777"/><rect x="264.66" y="3" width="0.8" height="1" fill="#777"/><text x="270.65" y="5.8" font-size="6.5" font-weight="700" text-anchor="middle" fill="#555" font-family="Liberation Sans">9</text><rect x="275.84" y="3" width="0.8" height="1" fill="#777"/><rect x="281.43" y="2" width="0.8" height="3" fill="#777"/><rect x="287.01" y="3" width="0.8" height="1" fill="#777"/><text x="293.00" y="5.8" font-size="6.5" font-weight="700" text-anchor="middle" fill="#555" font-family="Liberation Sans">10</text><rect x="298.19" y="3" width="0.8" height="1" fill="#777"/><rect x="303.78" y="2" width="0.8" height="3" fill="#777"/><rect x="309.36" y="3" width="0.8" height="1" fill="#777"/><text x="315.35" y="5.8" font-size="6.5" font-weight="700" text-anchor="middle" fill="#555" font-family="Liberation Sans">11</text><rect x="320.54" y="3" width="0.8" height="1" fill="#777"/><rect x="326.13" y="2" width="0.8" height="3" fill="#777"/><rect x="331.71" y="3" width="0.8" height="1" fill="#777"/><text x="337.70" y="5.8" font-size="6.5" font-weight="700" text-anchor="middle" fill="#555" font-family="Liberation Sans">12</text><rect x="342.89" y="3" width="0.8" height="1" fill="#777"/><rect x="348.48" y="2" width="0.8" height="3" fill="#777"/><rect x="354.06" y="3" width="0.8" height="1" fill="#777"/><text x="360.05" y="5.8" font-size="6.5" font-weight="700" text-anchor="middle" fill="#555" font-family="Liberation Sans">13</text><rect x="365.24" y="3" width="0.8" height="1" fill="#777"/><rect x="370.82" y="2" width="0.8" height="3" fill="#777"/><rect x="376.41" y="3" width="0.8" height="1" fill="#777"/><text x="382.40" y="5.8" font-size="6.5" font-weight="700" text-anchor="middle" fill="#555" font-family="Liberation Sans">14</text><rect x="387.59" y="3" width="0.8" height="1" fill="#777"/><rect x="393.18" y="2" width="0.8" height="3" fill="#777"/><rect x="398.76" y="3" width="0.8" height="1" fill="#777"/><text x="404.75" y="5.8" font-size="6.5" font-weight="700" text-anchor="middle" fill="#555" font-family="Liberation Sans">15</text><rect x="409.94" y="3" width="0.8" height="1" fill="#777"/><rect x="415.52" y="2" width="0.8" height="3" fill="#777"/><rect x="421.11" y="3" width="0.8" height="1" fill="#777"/><text x="427.10" y="5.8" font-size="6.5" font-weight="700" text-anchor="middle" fill="#555" font-family="Liberation Sans">16</text><rect x="432.29" y="3" width="0.8" height="1" fill="#777"/><rect x="437.88" y="2" width="0.8" height="3" fill="#777"/><rect x="443.46" y="3" width="0.8" height="1" fill="#777"/><text x="449.45" y="5.8" font-size="6.5" font-weight="700" text-anchor="middle" fill="#555" font-family="Liberation Sans">17</text><rect x="454.64" y="3" width="0.8" height="1" fill="#777"/><rect x="460.23" y="2" width="0.8" height="3" fill="#777"/><rect x="465.81" y="3" width="0.8" height="1" fill="#777"/></svg>
<svg class="s" style="left:234px;top:96px;" width="8" height="15" viewBox="0 0 8 15"><path d="M1 0.8h5.5L3.75 4.5z" fill="#fff" stroke="#777" stroke-width="0.7"/><path d="M1 8.5h5.5L3.75 4.5z" fill="#fff" stroke="#777" stroke-width="0.7"/><rect x="1" y="10" width="5.5" height="3.5" fill="#fff" stroke="#777" stroke-width="0.7"/></svg>
<svg class="s" style="left:570.5px;top:101px;" width="7" height="8" viewBox="0 0 7 8"><path d="M0.8 6.5h5.5L3.55 2.5z" fill="#fff" stroke="#777" stroke-width="0.7"/></svg>
<div class="r" style="left:3px;top:97px;width:11px;height:11px;background:#fff;border:1px solid #e0e0e0"></div>
<svg class="s" style="left:5px;top:99px;" width="7" height="7" viewBox="0 0 7 7"><path d="M2.5 1.5v4h3" fill="none" stroke="#444" stroke-width="0.8"/></svg>
<div class="r" style="left:4px;top:120px;width:7px;height:57px;background:#c8c8c8"></div>
<div class="r" style="left:4px;top:177px;width:7px;height:426px;background:#fff"></div>
<svg class="s" style="left:4px;top:96px;overflow:hidden" width="7" height="507" viewBox="0 0 7 507"><text transform="translate(5.5 36.30) rotate(-90)" font-size="6" text-anchor="middle" y="2" fill="#555" font-family="Liberation Sans">2</text><rect x="5" y="41.49" width="1" height="0.8" fill="#777"/><rect x="4" y="47.08" width="3" height="0.8" fill="#777"/><rect x="5" y="52.66" width="1" height="0.8" fill="#777"/><text transform="translate(5.5 58.65) rotate(-90)" font-size="6" text-anchor="middle" y="2" fill="#555" font-family="Liberation Sans">1</text><rect x="5" y="63.84" width="1" height="0.8" fill="#777"/><rect x="4" y="69.43" width="3" height="0.8" fill="#777"/><rect x="5" y="75.01" width="1" height="0.8" fill="#777"/><rect x="5" y="86.19" width="1" height="0.8" fill="#777"/><rect x="4" y="91.78" width="3" height="0.8" fill="#777"/><rect x="5" y="97.36" width="1" height="0.8" fill="#777"/><text transform="translate(5.5 103.35) rotate(-90)" font-size="6" text-anchor="middle" y="2" fill="#555" font-family="Liberation Sans">1</text><rect x="5" y="108.54" width="1" height="0.8" fill="#777"/><rect x="4" y="114.12" width="3" height="0.8" fill="#777"/><rect x="5" y="119.71" width="1" height="0.8" fill="#777"/><text transform="translate(5.5 125.70) rotate(-90)" font-size="6" text-anchor="middle" y="2" fill="#555" font-family="Liberation Sans">2</text><rect x="5" y="130.89" width="1" height="0.8" fill="#777"/><rect x="4" y="136.47" width="3" height="0.8" fill="#777"/><rect x="5" y="142.06" width="1" height="0.8" fill="#777"/><text transform="translate(5.5 148.05) rotate(-90)" font-size="6" text-anchor="middle" y="2" fill="#555" font-family="Liberation Sans">3</text><rect x="5" y="153.24" width="1" height="0.8" fill="#777"/><rect x="4" y="158.83" width="3" height="0.8" fill="#777"/><rect x="5" y="164.41" width="1" height="0.8" fill="#777"/><text transform="translate(5.5 170.40) rotate(-90)" font-size="6" text-anchor="middle" y="2" fill="#555" font-family="Liberation Sans">4</text><rect x="5" y="175.59" width="1" height="0.8" fill="#777"/><rect x="4" y="181.17" width="3" height="0.8" fill="#777"/><rect x="5" y="186.76" width="1" height="0.8" fill="#777"/><text transform="translate(5.5 192.75) rotate(-90)" font-size="6" text-anchor="middle" y="2" fill="#555" font-family="Liberation Sans">5</text><rect x="5" y="197.94" width="1" height="0.8" fill="#777"/><rect x="4" y="203.53" width="3" height="0.8" fill="#777"/><rect x="5" y="209.11" width="1" height="0.8" fill="#777"/><text transform="translate(5.5 215.10) rotate(-90)" font-size="6" text-anchor="middle" y="2" fill="#555" font-family="Liberation Sans">6</text><rect x="5" y="220.29" width="1" height="0.8" fill="#777"/><rect x="4" y="225.88" width="3" height="0.8" fill="#777"/><rect x="5" y="231.46" width="1" height="0.8" fill="#777"/><text transform="translate(5.5 237.45) rotate(-90)" font-size="6" text-anchor="middle" y="2" fill="#555" font-family="Liberation Sans">7</text><rect x="5" y="242.64" width="1" height="0.8" fill="#777"/><rect x="4" y="248.23" width="3" height="0.8" fill="#777"/><rect x="5" y="253.81" width="1" height="0.8" fill="#777"/><text transform="translate(5.5 259.80) rotate(-90)" font-size="6" text-anchor="middle" y="2" fill="#555" font-family="Liberation Sans">8</text><rect x="5" y="264.99" width="1" height="0.8" fill="#777"/><rect x="4" y="270.58" width="3" height="0.8" fill="#777"/><rect x="5" y="276.16" width="1" height="0.8" fill="#777"/><text transform="translate(5.5 282.15) rotate(-90)" font-size="6" text-anchor="middle" y="2" fill="#555" font-family="Liberation Sans">9</text><rect x="5" y="287.34" width="1" height="0.8" fill="#777"/><rect x="4" y="292.93" width="3" height="0.8" fill="#777"/><rect x="5" y="298.51" width="1" height="0.8" fill="#777"/><text transform="translate(5.5 304.50) rotate(-90)" font-size="6" text-anchor="middle" y="2" fill="#555" font-family="Liberation Sans">10</text><rect x="5" y="309.69" width="1" height="0.8" fill="#777"/><rect x="4" y="315.28" width="3" height="0.8" fill="#777"/><rect x="5" y="320.86" width="1" height="0.8" fill="#777"/><text transform="translate(5.5 326.85) rotate(-90)" font-size="6" text-anchor="middle" y="2" fill="#555" font-family="Liberation Sans">11</text><rect x="5" y="332.04" width="1" height="0.8" fill="#777"/><rect x="4" y="337.63" width="3" height="0.8" fill="#777"/><rect x="5" y="343.21" width="1" height="0.8" fill="#777"/><text transform="translate(5.5 349.20) rotate(-90)" font-size="6" text-anchor="middle" y="2" fill="#555" font-family="Liberation Sans">12</text><rect x="5" y="354.39" width="1" height="0.8" fill="#777"/><rect x="4" y="359.98" width="3" height="0.8" fill="#777"/><rect x="5" y="365.56" width="1" height="0.8" fill="#777"/><text transform="translate(5.5 371.55) rotate(-90)" font-size="6" text-anchor="middle" y="2" fill="#555" font-family="Liberation Sans">13</text><rect x="5" y="376.74" width="1" height="0.8" fill="#777"/><rect x="4" y="382.33" width="3" height="0.8" fill="#777"/><rect x="5" y="387.91" width="1" height="0.8" fill="#777"/><text transform="translate(5.5 393.90) rotate(-90)" font-size="6" text-anchor="middle" y="2" fill="#555" font-family="Liberation Sans">14</text><rect x="5" y="399.09" width="1" height="0.8" fill="#777"/><rect x="4" y="404.68" width="3" height="0.8" fill="#777"/><rect x="5" y="410.26" width="1" height="0.8" fill="#777"/><text transform="translate(5.5 416.25) rotate(-90)" font-size="6" text-anchor="middle" y="2" fill="#555" font-family="Liberation Sans">15</text><rect x="5" y="421.44" width="1" height="0.8" fill="#777"/><rect x="4" y="427.02" width="3" height="0.8" fill="#777"/><rect x="5" y="432.61" width="1" height="0.8" fill="#777"/><text transform="translate(5.5 438.60) rotate(-90)" font-size="6" text-anchor="middle" y="2" fill="#555" font-family="Liberation Sans">16</text><rect x="5" y="443.79" width="1" height="0.8" fill="#777"/><rect x="4" y="449.38" width="3" height="0.8" fill="#777"/><rect x="5" y="454.96" width="1" height="0.8" fill="#777"/><text transform="translate(5.5 460.95) rotate(-90)" font-size="6" text-anchor="middle" y="2" fill="#555" font-family="Liberation Sans">17</text><rect x="5" y="466.14" width="1" height="0.8" fill="#777"/><rect x="4" y="471.73" width="3" height="0.8" fill="#777"/><rect x="5" y="477.31" width="1" height="0.8" fill="#777"/><text transform="translate(5.5 483.30) rotate(-90)" font-size="6" text-anchor="middle" y="2" fill="#555" font-family="Liberation Sans">18</text><rect x="5" y="488.49" width="1" height="0.8" fill="#777"/><rect x="4" y="494.07" width="3" height="0.8" fill="#777"/><rect x="5" y="499.66" width="1" height="0.8" fill="#777"/><text transform="translate(5.5 505.65) rotate(-90)" font-size="6" text-anchor="middle" y="2" fill="#555" font-family="Liberation Sans">19</text></svg>
<div class="r" style="left:170px;top:119px;width:663px;height:485px;background:#e2e2e2"></div>
<div class="r" style="left:171px;top:120px;width:661px;height:484px;background:#d6d6d6"></div>
<div class="r" style="left:172px;top:121px;width:659px;height:483px;background:#fff"></div>
<div class="r" style="left:643px;top:121px;width:1px;height:483px;background:#dedede"></div>
<div class="r" style="left:209px;top:176px;width:1px;height:42.5px;background:#888"></div>
<div class="r" style="left:209px;top:261px;width:1px;height:22px;background:#888"></div>
<div class="r" style="left:209px;top:324px;width:1px;height:24px;background:#888"></div>
<div class="r" style="left:350px;top:262px;width:293px;height:1px;background:#9b8a8e"></div>
<div class="r" style="left:296px;top:262px;width:54px;height:21px;background:#f7dfe0;border:1px solid #a89498;border-bottom-color:#e7c8cc"></div>
<div class="ln" style="top:178.20px"><span>Lorem</span><span>ipsum</span><span><span><span class="red" style="text-decoration:underline;text-decoration-thickness:1px;text-underline-offset:2px;text-decoration-color:#cf8d9c">mucho&nbsp;</span>dolor</span></span><span>sit</span><span>amet</span><span>consectetur</span></div>
<div class="ln" style="top:199.49px"><span>adipiscing</span><span>elit</span><span>eleifend</span><span>a,</span><span><span><span class="red" style="text-decoration:line-through;text-decoration-thickness:1px">fusce&nbsp;</span>ornare</span></span><span>tempus</span></div>
<div class="ln" style="top:220.78px"><span>ante</span><span>facilisi</span><span>dapibus</span><span>fringilla</span><span>morbi,</span><span>lacinia</span><span>orci</span></div>
<div class="ln" style="top:242.07px"><span>nibh</span><span>diam</span><span>vel</span><span>quam</span><span>sociis</span><span>enim.</span><span>Orci</span><span>morbi</span><span>per</span></div>
<div class="ln" style="top:263.36px"><span>magnis</span><span><span style="letter-spacing:-0.45px">me<span class="red" style="text-decoration:underline;text-decoration-thickness:1px">a</span>tus</span></span><span>urna</span><span>sagittis</span><span><span>dict<span class="red" style="text-decoration:underline;text-decoration-thickness:1px">at</span>um<span class="red" style="text-decoration:line-through;text-decoration-thickness:1px">&nbsp;viverra</span>,</span></span></div>
<div class="ln" style="top:284.65px"><span>ridiculus</span><span>scelerisque</span><span>conubia</span><span>dignissim</span><span>platea</span></div>
<div class="ln" style="top:305.94px"><span>vitae</span><span>montes,</span><span>cras</span><span>laoreet</span><span>sociosqu</span><span>libero</span></div>
<div class="ln" style="top:327.23px"><span>pretium</span><span>magna</span><span>porttitor.</span><span><span>Molli<span class="red" style="text-decoration:underline;text-decoration-thickness:1px">to</span>s</span></span><span>laoreet</span><span>eget</span></div>
<div class="ln" style="top:348.52px"><span>elementum</span><span>aenean</span><span>nisl</span><span>malesuada</span><span>mattis</span></div>
<div class="ln" style="top:369.81px"><span>condimentum</span><span>suscipit</span><span>libero</span><span>curabitur,</span></div>
<div class="ln" style="top:391.10px"><span>venenatis</span><span>class</span><span>turpis</span><span>dictumst</span><span>duis</span><span>vehicula</span></div>
<div class="ln" style="top:412.39px"><span>metus</span><span>interdum</span><span>primis</span><span>potenti</span><span>ullamcorper,</span></div>
<div class="ln" style="top:433.68px"><span>senectus</span><span>tempus</span><span>ultrices</span><span>neque</span><span>cras</span><span>erat</span></div>
<div class="ln" style="top:454.97px;display:block">pretium parturient taciti sed.</div>
<div class="ln" style="top:488.20px"><span>Lacinia</span><span>torquent</span><span>ultricies</span><span>massa</span><span>nam</span><span>sem</span><span>taciti</span></div>
<div class="ln" style="top:509.49px"><span>duis</span><span>auctor</span><span>commodo</span><span>pharetra,</span><span>mollis</span><span>aliquam</span></div>
<div class="ln" style="top:530.78px"><span>egestas</span><span>dictum</span><span>aenean</span><span>fermentum</span><span>gravida</span></div>
<div class="ln" style="top:552.07px"><span>turpis</span><span>eu,</span><span>dapibus</span><span>semper</span><span>accumsan</span><span>nec</span></div>
<div class="ln" style="top:573.36px"><span>suspendisse</span><span>aptent</span><span>nunc</span><span>bibendum</span><span>nascetur.</span></div>
<div class="ln" style="top:594.65px"><span>Parturient</span><span>faucibus</span><span>fringilla</span><span>in</span><span>nascetur</span></div>
<svg class="s" style="left:296px;top:278px;" width="54" height="4" viewBox="0 0 54 4"><path d="M0.5 2.5 L2.0 1.5 L3.5 2.5 L5.0 1.5 L6.5 2.5 L8.0 1.5 L9.5 2.5 L11.0 1.5 L12.5 2.5 L14.0 1.5 L15.5 2.5 L17.0 1.5 L18.5 2.5 L20.0 1.5 L21.5 2.5 L23.0 1.5 L24.5 2.5 L26.0 1.5 L27.5 2.5 L29.0 1.5 L30.5 2.5 L32.0 1.5 L33.5 2.5 L35.0 1.5 L36.5 2.5 L38.0 1.5 L39.5 2.5 L41.0 1.5 L42.5 2.5 L44.0 1.5 L45.5 2.5 L47.0 1.5 L48.5 2.5 L50.0 1.5 L51.5 2.5 L53.0 1.5 L53.5 2.5" fill="none" stroke="#cf3040" stroke-width="1.1"/></svg>
<svg class="s" style="left:451px;top:278px;" width="66" height="4" viewBox="0 0 66 4"><path d="M0.5 2.5 L2.0 1.5 L3.5 2.5 L5.0 1.5 L6.5 2.5 L8.0 1.5 L9.5 2.5 L11.0 1.5 L12.5 2.5 L14.0 1.5 L15.5 2.5 L17.0 1.5 L18.5 2.5 L20.0 1.5 L21.5 2.5 L23.0 1.5 L24.5 2.5 L26.0 1.5 L27.5 2.5 L29.0 1.5 L30.5 2.5 L32.0 1.5 L33.5 2.5 L35.0 1.5 L36.5 2.5 L38.0 1.5 L39.5 2.5 L41.0 1.5 L42.5 2.5 L44.0 1.5 L45.5 2.5 L47.0 1.5 L48.5 2.5 L50.0 1.5 L51.5 2.5 L53.0 1.5 L54.5 2.5 L56.0 1.5 L57.5 2.5 L59.0 1.5 L60.5 2.5 L62.0 1.5 L63.5 2.5 L65.0 1.5 L65.5 2.5" fill="none" stroke="#cf3040" stroke-width="1.1"/></svg>
<div class="r" style="left:414px;top:348px;width:1px;height:18px;background:#000"></div>
<svg class="s" style="left:560px;top:110px;" width="130" height="150" viewBox="0 0 130 150"><path d="M20.5 11.2 L106 128.5" stroke="#ad3a4b" stroke-width="2.4" stroke-linecap="round"/><path d="M110.7 137 L99.7 128.6 L106.8 123.4 Z" fill="#d23a48" stroke="#d23a48" stroke-width="1"/></svg>
<div class="r" style="left:643px;top:249px;width:188px;height:42px;background:#f9f9f9;border:1px solid #9e9196;border-right:none"></div>
<div class="r" style="left:644px;top:275px;width:187px;height:1px;background:#ececec"></div>
<svg class="s" style="left:648px;top:251px;" width="16" height="16" viewBox="0 0 16 16"><defs><linearGradient id="av2" x1="0" y1="0" x2="0" y2="1"><stop offset="0" stop-color="#1d4f6e"/><stop offset="0.32" stop-color="#3d7090"/><stop offset="0.42" stop-color="#e8ecee"/><stop offset="1" stop-color="#a8aeb3"/></linearGradient></defs><circle cx="8" cy="8" r="7" fill="url(#av2)"/><ellipse cx="5.3" cy="7.3" rx="2.4" ry="2.2" fill="#fff"/><ellipse cx="10.5" cy="8" rx="2.4" ry="2.2" fill="#fff"/><circle cx="5.6" cy="7.5" r="1.4" fill="#111"/><circle cx="10.8" cy="8.4" r="1.4" fill="#111"/></svg>
<div class="t" style="left:670.00px;top:253.80px;font-size:7px;line-height:8.40px;color:#1a1a1a;font-weight:700;transform:scaleX(0.9539);">Rubén Velasco</div>
<div class="t" style="left:722.00px;top:253.80px;font-size:7px;line-height:8.40px;color:#222;transform:scaleX(0.9898);">Hace un instante</div>
<div class="t" style="left:670.00px;top:262.30px;font-size:7px;line-height:8.40px;color:#262626;transform:scaleX(0.9126);">Meatus es una palabra graciosa xD</div>
<svg class="s" style="left:670px;top:268px;" width="22" height="3" viewBox="0 0 22 3"><path d="M0.2 2.3 L1.7 1.2999999999999998 L3.2 2.3 L4.7 1.2999999999999998 L6.2 2.3 L7.7 1.2999999999999998 L9.2 2.3 L10.7 1.2999999999999998 L12.2 2.3 L13.7 1.2999999999999998 L15.2 2.3 L16.7 1.2999999999999998 L18.2 2.3 L19.7 1.2999999999999998 L21.2 2.3 L21.8 1.2999999999999998" fill="none" stroke="#c03a4a" stroke-width="0.7"/></svg>
<div class="r" style="left:762px;top:269.5px;width:8.5px;height:0.8px;background:#333"></div>
<svg class="s" style="left:732px;top:278px;" width="10" height="9" viewBox="0 0 10 9"><path d="M2 1h7v5H4.5L2.5 8V6H2z" fill="none" stroke="#777" stroke-width="0.8"/><circle cx="2" cy="2" r="1.2" fill="#777"/></svg>
<div class="t" style="left:743.00px;top:277.80px;font-size:7px;line-height:8.40px;color:#555;transform:scaleX(0.9928);">Responder</div>
<svg class="s" style="left:785px;top:278px;" width="10" height="9" viewBox="0 0 10 9"><path d="M2 1h7v5H4.5L2.5 8V6H2z" fill="none" stroke="#777" stroke-width="0.8"/></svg>
<div class="t" style="left:796.00px;top:277.80px;font-size:7px;line-height:8.40px;color:#555;transform:scaleX(1.0137);">Resolver</div>
<div class="r" style="left:990px;top:97px;width:9px;height:506px;background:linear-gradient(90deg,#e6e6e6,#e2e3e5 60%,#d9e0e8)"></div>
<div class="r" style="left:990px;top:97px;width:9px;height:9px;background:#fff"></div>
<div class="r" style="left:989px;top:106px;width:10px;height:176px;background:#fff;border-left:1px solid #d2d2d2;border-bottom:1px solid #cdcdcd;border-top:1px solid #dedede"></div>
<svg class="s" style="left:990px;top:98px;" width="8" height="7" viewBox="0 0 8 7"><path d="M1.5 5L4 2.5L6.5 5Z" fill="#444"/></svg>
<div class="r" style="left:990px;top:593.5px;width:8px;height:7.5px;background:#fff"></div>
<svg class="s" style="left:990px;top:594px;" width="8" height="7" viewBox="0 0 8 7"><path d="M1.5 2L4 4.5L6.5 2Z" fill="#444"/></svg>
<div class="r" style="left:0px;top:603px;width:1000px;height:14px;background:#f3f3f3;border-top:1px solid #d8d8d8"></div>
<div class="t" style="left:5.00px;top:606.10px;font-size:7px;line-height:8.40px;color:#555;transform:scaleX(0.9490);">Página 1 de 2</div>
<div class="t" style="left:58.00px;top:606.10px;font-size:7px;line-height:8.40px;color:#555;transform:scaleX(0.9388);">153 palabras</div>
<svg class="s" style="left:106px;top:604px;" width="11" height="10" viewBox="0 0 11 10"><path d="M1 1h4v7H1zM5 1h4v4" fill="none" stroke="#555" stroke-width="0.8"/><path d="M6 7l2 2 2-3" fill="none" stroke="#555" stroke-width="0.8"/></svg>
<div class="t" style="left:127.00px;top:606.10px;font-size:7px;line-height:8.40px;color:#555;transform:scaleX(0.9165);">Español (España)</div>
<svg class="s" style="left:750px;top:604px;" width="10" height="10" viewBox="0 0 10 10"><path d="M1 3V1h2M7 1h2v2M9 7v2H7M3 9H1V7" fill="none" stroke="#555" stroke-width="0.8"/><path d="M3.5 2.5h2l1.5 1.5v4H3.5z" fill="none" stroke="#555" stroke-width="0.8"/></svg>
<div class="t" style="left:761.00px;top:606.10px;font-size:7px;line-height:8.40px;color:#444;transform:scaleX(0.9969);">Concentración</div>
<svg class="s" style="left:818px;top:605px;" width="10" height="9" viewBox="0 0 10 9"><path d="M0.5 1h4v7h-4zM5 1h4v7H5z" fill="#c4c4c4" stroke="#777" stroke-width="0.8"/></svg>
<div class="r" style="left:837px;top:604px;width:23px;height:13px;background:#d4d4d4"></div>
<svg class="s" style="left:844px;top:605px;" width="8" height="10" viewBox="0 0 8 10"><rect x="0.5" y="0.5" width="6" height="8" fill="#8a8a8a" stroke="#444" stroke-width="0.8"/></svg>
<svg class="s" style="left:868px;top:605px;" width="10" height="10" viewBox="0 0 10 10"><rect x="0.5" y="0.5" width="7" height="8" fill="#b8b8b8" stroke="#666" stroke-width="0.8"/><path d="M2 2.5h4M2 4.5h3" stroke="#777" stroke-width="0.7"/><circle cx="6.5" cy="7" r="2.5" fill="#555"/></svg>
<div class="r" style="left:889px;top:610px;width:4px;height:1px;background:#555"></div>
<div class="r" style="left:895px;top:610px;width:60px;height:1px;background:#cfcfcf"></div>
<div class="r" style="left:923.5px;top:606px;width:3px;height:7.5px;background:#555;border-radius:1px"></div>
<svg class="s" style="left:956px;top:606px;" width="7" height="7" viewBox="0 0 7 7"><path d="M3.5 0.5v6M0.5 3.5h6" stroke="#555" stroke-width="0.9"/></svg>
<div class="t" style="left:970.00px;top:606.10px;font-size:7px;line-height:8.40px;color:#444;transform:scaleX(0.9069);">100 %</div>
<div class="r" style="left:0px;top:20px;width:1px;height:597px;background:#6a7893"></div>
<div class="r" style="left:1px;top:21px;width:1px;height:582px;background:#e4ebf4"></div>
<div class="r" style="left:999px;top:20px;width:1px;height:597px;background:#3d4b5e"></div>
<div class="r" style="left:998px;top:97px;width:1px;height:506px;background:#e8eef6"></div>
<div class="r" style="left:0px;top:616px;width:1000px;height:1px;background:#4a5670"></div>
</body></html>
